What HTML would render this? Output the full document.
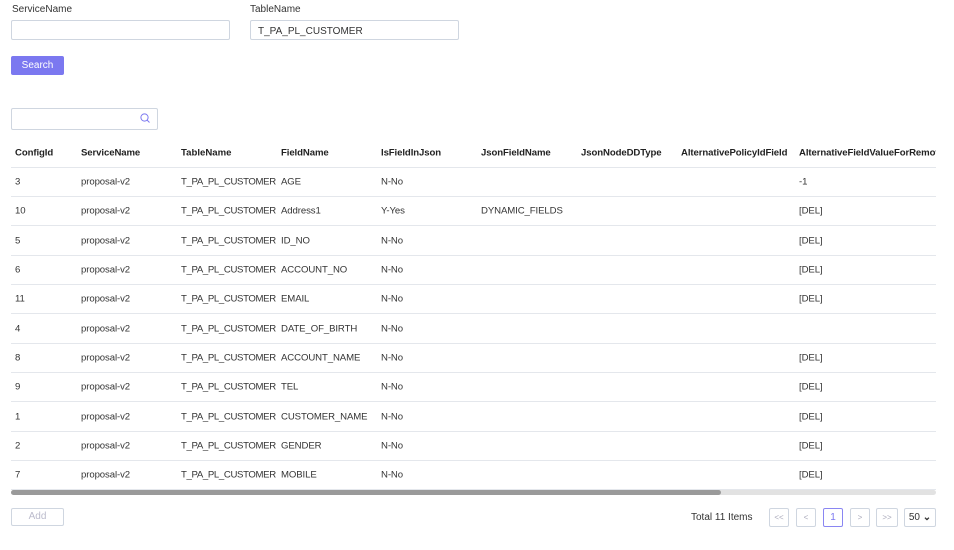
<!DOCTYPE html><html><head><style>
body{margin:0;width:954px;height:550px;overflow:hidden;background:#fff;font-family:"Liberation Sans",sans-serif;font-size:10px;color:#333;position:relative}
.a{position:absolute}
.inp{position:absolute;border:1px solid #cfd6e0;border-radius:2px;height:20px;box-sizing:border-box;font-size:10px;padding:5px 7px 0}
.lab{position:absolute;font-size:10px;color:#333}
.r{position:absolute;left:11px;width:925px;border-bottom:1px solid #e4e7ec;white-space:nowrap;font-size:9.6px;letter-spacing:-0.1px}
.r span{position:absolute;top:50%;transform:translateY(-50%)}
.h span{font-weight:bold;color:#222}
.c1{left:4px}.c2{left:70px}.c3{left:170px;letter-spacing:-0.35px}.c4{left:270px}.c5{left:370px}.c6{left:470px}.c7{left:570px}.c8{left:670px}.c9{left:788px}
.pb{position:absolute;top:508px;height:19px;width:20px;border:1px solid #cfd6e0;border-radius:2px;box-sizing:border-box;font-size:8px;color:#aab;text-align:center;line-height:17px}
</style></head><body>
<div class="lab" style="left:12px;top:4px">ServiceName</div>
<div class="lab" style="left:250px;top:4px">TableName</div>
<div class="inp" style="left:11px;top:20px;width:219px"></div>
<div class="inp" style="left:250px;top:20px;width:209px">T_PA_PL_CUSTOMER</div>
<div class="a" style="left:11px;top:56px;width:53px;height:19px;background:#7b78f0;border-radius:2px;color:#fff;font-size:10px;text-align:center;line-height:19px">Search</div>
<div class="inp" style="left:11px;top:108px;width:147px;height:22px"></div>
<svg class="a" style="left:139px;top:112px" width="12" height="12" viewBox="0 0 12 12"><circle cx="5.5" cy="5.5" r="3.6" fill="none" stroke="#7b78f0" stroke-width="1"/><line x1="8" y1="8" x2="10.5" y2="10.5" stroke="#7b78f0"/></svg>
<div style="position:absolute;left:0;top:0;width:936px;height:495px;overflow:hidden">
<div class="r h" style="top:139px;height:28px"><span class="c1">ConfigId</span><span class="c2">ServiceName</span><span class="c3" style="letter-spacing:0">TableName</span><span class="c4">FieldName</span><span class="c5">IsFieldInJson</span><span class="c6">JsonFieldName</span><span class="c7">JsonNodeDDType</span><span class="c8">AlternativePolicyIdField</span><span class="c9">AlternativeFieldValueForRemove</span></div>
<div class="r" style="top:168px;height:28px"><span class="c1">3</span><span class="c2">proposal-v2</span><span class="c3">T_PA_PL_CUSTOMER</span><span class="c4">AGE</span><span class="c5">N-No</span><span class="c9">-1</span></div>
<div class="r" style="top:197px;height:28px"><span class="c1">10</span><span class="c2">proposal-v2</span><span class="c3">T_PA_PL_CUSTOMER</span><span class="c4">Address1</span><span class="c5">Y-Yes</span><span class="c6">DYNAMIC_FIELDS</span><span class="c9">[DEL]</span></div>
<div class="r" style="top:226px;height:29px"><span class="c1">5</span><span class="c2">proposal-v2</span><span class="c3">T_PA_PL_CUSTOMER</span><span class="c4">ID_NO</span><span class="c5">N-No</span><span class="c9">[DEL]</span></div>
<div class="r" style="top:256px;height:28px"><span class="c1">6</span><span class="c2">proposal-v2</span><span class="c3">T_PA_PL_CUSTOMER</span><span class="c4">ACCOUNT_NO</span><span class="c5">N-No</span><span class="c9">[DEL]</span></div>
<div class="r" style="top:285px;height:28px"><span class="c1">11</span><span class="c2">proposal-v2</span><span class="c3">T_PA_PL_CUSTOMER</span><span class="c4">EMAIL</span><span class="c5">N-No</span><span class="c9">[DEL]</span></div>
<div class="r" style="top:314px;height:29px"><span class="c1">4</span><span class="c2">proposal-v2</span><span class="c3">T_PA_PL_CUSTOMER</span><span class="c4">DATE_OF_BIRTH</span><span class="c5">N-No</span></div>
<div class="r" style="top:344px;height:28px"><span class="c1">8</span><span class="c2">proposal-v2</span><span class="c3">T_PA_PL_CUSTOMER</span><span class="c4">ACCOUNT_NAME</span><span class="c5">N-No</span><span class="c9">[DEL]</span></div>
<div class="r" style="top:373px;height:28px"><span class="c1">9</span><span class="c2">proposal-v2</span><span class="c3">T_PA_PL_CUSTOMER</span><span class="c4">TEL</span><span class="c5">N-No</span><span class="c9">[DEL]</span></div>
<div class="r" style="top:402px;height:29px"><span class="c1">1</span><span class="c2">proposal-v2</span><span class="c3">T_PA_PL_CUSTOMER</span><span class="c4">CUSTOMER_NAME</span><span class="c5">N-No</span><span class="c9">[DEL]</span></div>
<div class="r" style="top:432px;height:28px"><span class="c1">2</span><span class="c2">proposal-v2</span><span class="c3">T_PA_PL_CUSTOMER</span><span class="c4">GENDER</span><span class="c5">N-No</span><span class="c9">[DEL]</span></div>
<div class="r" style="top:461px;height:28px"><span class="c1">7</span><span class="c2">proposal-v2</span><span class="c3">T_PA_PL_CUSTOMER</span><span class="c4">MOBILE</span><span class="c5">N-No</span><span class="c9">[DEL]</span></div>
</div>
<div class="a" style="left:11px;top:490px;width:925px;height:5px;background:#e2e2e2;border-radius:3px"></div>
<div class="a" style="left:11px;top:490px;width:710px;height:5px;background:#9a9a9a;border-radius:3px"></div>
<div class="a" style="left:11px;top:508px;width:53px;height:18px;border:1px solid #cfd6e0;border-radius:2px;box-sizing:border-box;color:#bbc;text-align:center;line-height:16px;font-size:10px">Add</div>
<div class="lab" style="left:691px;top:512px">Total 11 Items</div>
<div class="pb" style="left:769px">&lt;&lt;</div>
<div class="pb" style="left:796px">&lt;</div>
<div class="pb" style="left:823px;border-color:#8a86f2;color:#7b78f0;font-size:10px">1</div>
<div class="pb" style="left:850px">&gt;</div>
<div class="pb" style="left:876px;width:22px">&gt;&gt;</div>
<div class="pb" style="left:904px;width:32px;color:#333;font-size:10px">50 <b>&#8964;</b></div>
</body></html>
